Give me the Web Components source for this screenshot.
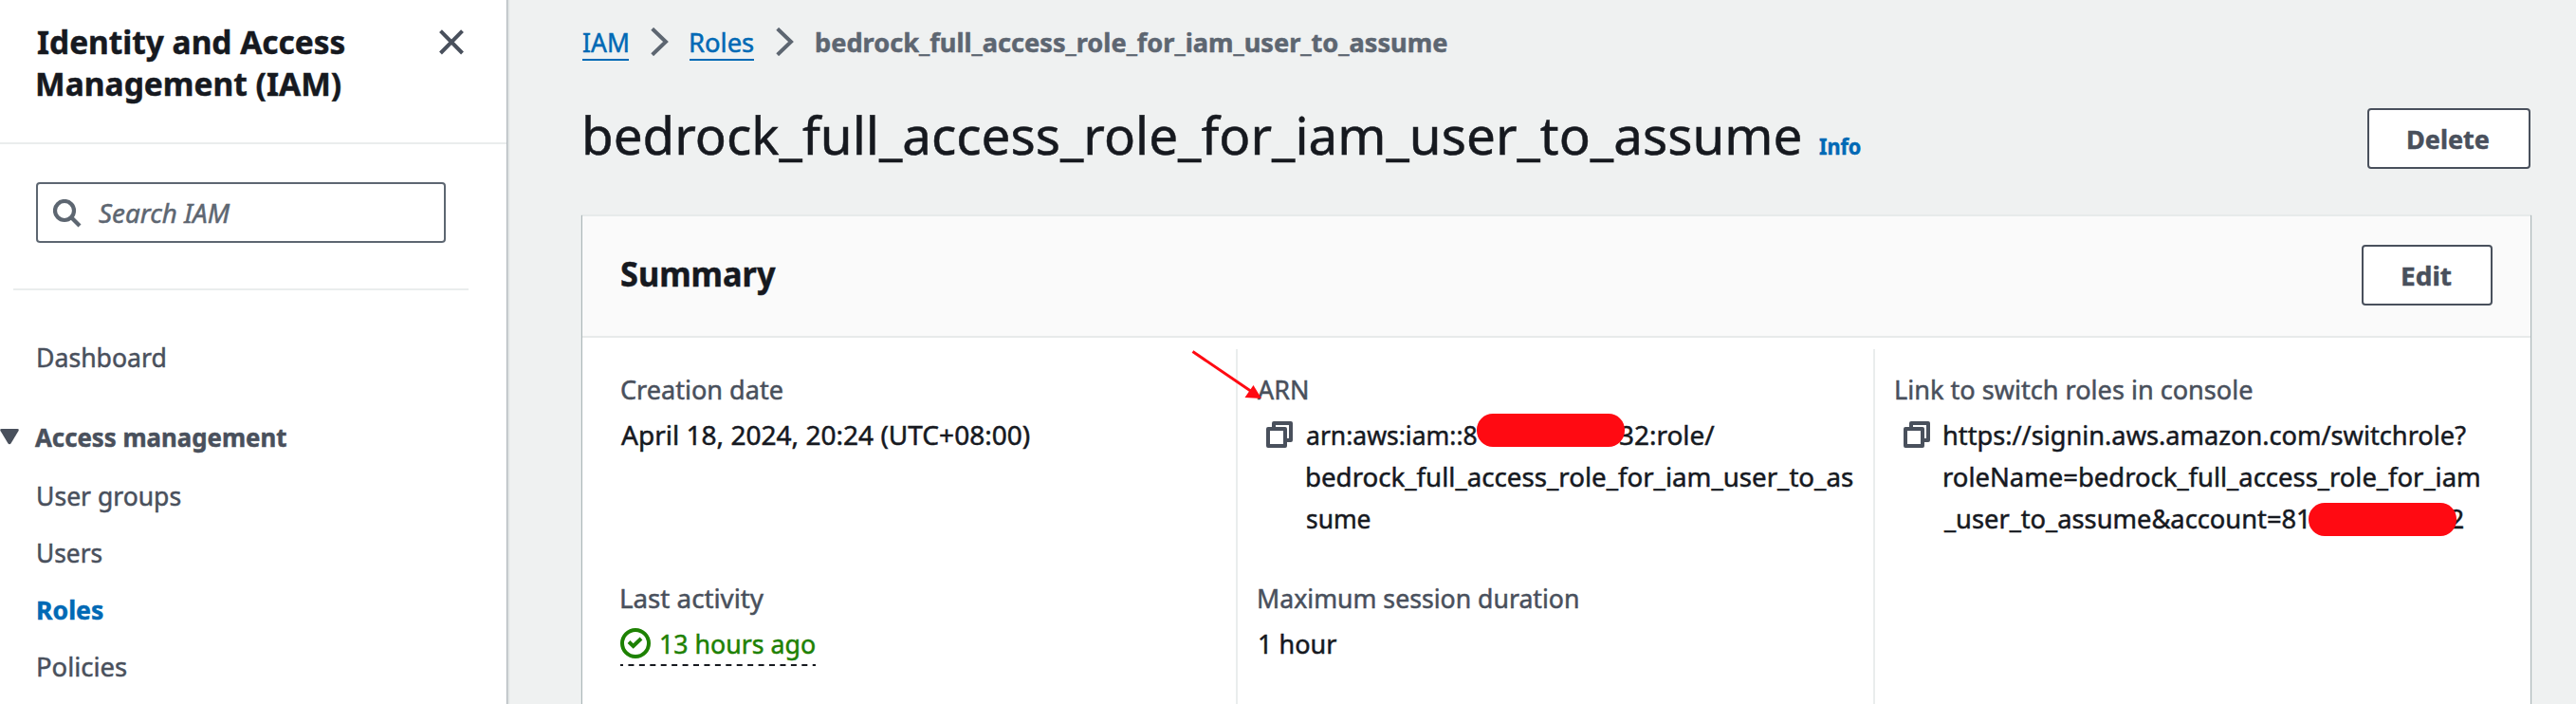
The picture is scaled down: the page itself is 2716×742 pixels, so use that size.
<!DOCTYPE html>
<html lang="en">
<head>
<meta charset="utf-8">
<title>IAM role</title>
<style>
html,body{margin:0;height:742px;overflow:hidden;background:#eff1f1}
body{font-family:"Noto Sans","Open Sans",sans-serif;font-size:27.5px;line-height:44px;color:#16191f}
</style>
</head>
<body>
<iam-app></iam-app>
<script>
const define=(name,html,after)=>customElements.define(name,class extends HTMLElement{
  connectedCallback(){
    if(this.shadowRoot)return;
    const t=document.createElement('template');
    t.innerHTML=typeof html==='function'?html(this):html;
    this.attachShadow({mode:'open'}).append(t.content.cloneNode(true));
    if(after)after(this);
  }
});

/* One line of text, scaled horizontally so that its glyphs span exactly "w" pixels. */
define('fit-text',`<style>:host{display:block;white-space:pre;flex:none}
span{display:inline-block;transform-origin:0 50%;-webkit-text-stroke:.5px currentColor}</style><span><slot></slot></span>`,el=>{
  const w=+el.getAttribute('w'),dx=+(el.getAttribute('dx')||0),s=el.shadowRoot.querySelector('span');
  const cs=getComputedStyle(el),c=document.createElement('canvas').getContext('2d');
  c.font=`${cs.fontStyle} ${cs.fontWeight} ${cs.fontSize} ${cs.fontFamily}`;
  const m=c.measureText(el.textContent),l=-m.actualBoundingBoxLeft,ink=m.actualBoundingBoxRight-l,k=w/ink;
  const dy=parseFloat(cs.fontSize)>30?0:1;
  el.style.width=w+'px';
  s.style.transform=`translate(${dx-l*k}px,${dy}px) scaleX(${k})`;
});

const icons={
  close:['26','26.5','0 0 26 26.5','<path d="M1.5 1.6 24.5 25M24.5 1.6 1.5 25" stroke="#49505c" stroke-width="4" fill="none"/>'],
  search:['30','30','0 0 30 30','<circle cx="12" cy="12" r="10" fill="none" stroke="#5d6671" stroke-width="4.2"/><path d="M19 19l9 9" stroke="#5d6671" stroke-width="4.2"/>'],
  caret:['20','17','0 0 20 17','<path d="M1.6 0H18.400Q20.600.3 19.400 2.300L11.600 15.200Q10 17.400 8.400 15.200L.6 2.300Q-.6.3 1.600 0Z" fill="#49505c"/>'],
  chevron:['19','30','0 0 19 30','<path d="M1.700 1.300 16 15 1.700 28.700" fill="none" stroke="#5d6671" stroke-width="4"/>'],
  copy:['28','28','0 0 28 28','<path d="M2 8h18v18H2zM8 8V2h18v18h-6" fill="none" stroke="#49505c" stroke-width="4" stroke-linejoin="round"/>'],
  check:['32','32','0 0 32 32','<circle cx="16" cy="16" r="14" fill="none" stroke="#1d8102" stroke-width="4"/><path d="M9 14.500l4.700 4.500 8.300-8" fill="none" stroke="#1d8102" stroke-width="4"/>']
};
define('ui-icon',el=>{const i=icons[el.getAttribute('name')];
  return `<style>:host{display:block;flex:none}svg{display:block}</style><svg width="${i[0]}" height="${i[1]}" viewBox="${i[2]}">${i[3]}</svg>`});

define('nav-item',`<style>:host{display:block;height:44px;margin:0 0 16px 39.500px;color:#49505c}
:host([active]){color:#0069b5;font-weight:700}</style><slot></slot>`);

define('nav-section',`<style>:host{display:flex;height:44px;color:#49505c;font-weight:700;margin:40px 0 18px}
ui-icon{margin:14px 16.500px 0 0}</style><ui-icon name="caret"></ui-icon><slot></slot>`);

define('search-box',`<style>:host{display:flex;box-sizing:border-box;margin:40px 0 0 38px;width:432px;height:64px;border:2px solid #5d6671;border-radius:4px;background:#fff;color:#5d6671;font-style:italic;padding:8px 0 0 16px}
ui-icon{margin:8px 18px 0 0}</style><ui-icon name="search"></ui-icon><slot></slot>`);

define('side-nav',`<style>:host{display:block;flex:none;width:534px;height:742px;background:#fff;box-shadow:1px 0 0 #b3b9be,2px 0 1px #d3d8d9,3px 0 1px #e3e6e6}
header{display:flex;justify-content:space-between;box-sizing:border-box;height:152px;border-bottom:2px solid #eaeded;padding:22px 45px 0 39.500px;font-weight:700;font-size:34.600px;color:#16191f}
header ui-icon{margin-top:9px}
hr{border:0;height:2px;width:480px;background:#eaeded;margin:48px 0 48px 14px}</style>
<header><div><fit-text w="323">Identity and Access</fit-text><fit-text w="319.500">Management (IAM)</fit-text></div><ui-icon name="close"></ui-icon></header>
<search-box><fit-text w="139">Search IAM</fit-text></search-box>
<hr>
<nav-item style="margin-bottom:0"><fit-text w="134">Dashboard</fit-text></nav-item>
<nav-section><fit-text w="265.500">Access management</fit-text></nav-section>
<nav-item><fit-text w="150">User groups</fit-text></nav-item>
<nav-item><fit-text w="67">Users</fit-text></nav-item>
<nav-item active><fit-text w="68.500">Roles</fit-text></nav-item>
<nav-item><fit-text w="93">Policies</fit-text></nav-item>`);

define('crumb-link',`<style>:host{display:block;box-sizing:border-box;height:42px;border-bottom:2px solid #0069b5;color:#0069b5;padding:0 1px}</style><slot></slot>`);

define('bread-crumb',`<style>:host{display:flex;height:44px;padding-top:22px}
ui-icon{margin:7px 22.500px 0}.now{margin-left:1.500px;color:#5d6671;font-weight:700}</style>
<crumb-link><fit-text w="47">IAM</fit-text></crumb-link><ui-icon name="chevron"></ui-icon>
<crumb-link><fit-text w="66">Roles</fit-text></crumb-link><ui-icon name="chevron"></ui-icon>
<fit-text class="now" w="665">bedrock_full_access_role_for_iam_user_to_assume</fit-text>`);

define('ui-button',`<style>:host{display:flex;justify-content:center;box-sizing:border-box;height:64px;border:2px solid #49505c;border-radius:4px;background:#fff;color:#49505c;font-weight:700;padding-top:8px}</style><slot></slot>`);

define('page-title',`<style>:host{display:flex;height:118px;padding-top:42px}
h1{margin:0;padding-left:3px;font-weight:400;font-size:54.800px;line-height:68px}
.info{font-size:24px;font-weight:700;color:#0069b5;margin:22.500px 0 0 19.500px}
ui-button{width:172px;margin:6px 0 0 auto}</style>
<h1><fit-text w="1281.500">bedrock_full_access_role_for_iam_user_to_assume</fit-text></h1>
<fit-text class="info" w="43.500">Info</fit-text>
<ui-button><fit-text w="85.500">Delete</fit-text></ui-button>`);

define('kv-item',`<style>:host{display:block;height:220px;position:relative}
.k{color:#49505c;margin-bottom:4px;height:44px}</style><div class="k"><slot name="label"></slot></div><slot></slot>`);

define('redaction-bar',`<style>:host{position:absolute;width:156px;height:35px;border-radius:17px;background:#ff0a12}</style>`);

define('copy-row',`<style>:host{display:flex;padding-left:8px}ui-icon{margin:8px 15.500px 0 0}</style><ui-icon name="copy"></ui-icon><div><slot></slot></div>`);

define('status-ok',`<style>:host{display:flex;box-sizing:border-box;width:206px;height:46px;color:#1d8102}
ui-icon{margin:6px 10.500px 0 -.5px}
svg{position:absolute;left:-.5px;top:92px}</style><ui-icon name="check"></ui-icon><slot></slot>
<svg width="206" height="2"><path d="M0 1H206" stroke="#16191f" stroke-width="2" stroke-dasharray="6 5.430" stroke-dashoffset="3"/></svg>`);

define('pointer-arrow',`<style>:host{position:absolute;left:-71px;top:-19px}svg{display:block}</style>
<svg width="76" height="54" viewBox="1256 369 76 54"><path d="M1257.500 370.500 1320 413" stroke="#ff0a12" stroke-width="3"/><path d="M1330 420 1312.500 419 1321.500 406Z" fill="#ff0a12"/></svg>`);

define('summary-card',`<style>:host{display:block;height:516px;background:#fff;box-shadow:0 1px 1px #b5babd,1px 1px 1px #aab7b8,-1px 1px 1px #aab7b8}
header{display:flex;justify-content:space-between;box-sizing:border-box;height:130px;border-top:2px solid #e7eaea;border-bottom:2px solid #e7eaea;background:#fafafa;padding:30px 40px 0 41px}
h2{margin:8.500px 0 0;font-size:35px;font-weight:700}
ui-button{width:138px}
.cols{display:grid;grid-template-columns:689px 672px 1fr;margin-top:12px;height:354px}
.cols>div{padding:20px 0 0 21.500px;border-left:2px solid #eaeded;box-sizing:border-box}
.cols>div:first-child{border:0;padding-left:40.500px}
.row{display:flex}</style>
<header><h2><fit-text w="162.500">Summary</fit-text></h2><ui-button><fit-text w="52">Edit</fit-text></ui-button></header>
<div class="cols">
<div>
<kv-item><fit-text slot="label" w="170.500">Creation date</fit-text><fit-text w="431">April 18, 2024, 20:24 (UTC+08:00)</fit-text></kv-item>
<kv-item><fit-text slot="label" w="151">Last activity</fit-text><status-ok><fit-text w="162.500">13 hours ago</fit-text></status-ok></kv-item>
</div>
<div>
<kv-item><fit-text slot="label" w="52.500" dx="-1">ARN</fit-text>
<copy-row><div class="row"><fit-text w="179">arn:aws:iam::8</fit-text><fit-text w="99.500" style="margin-left:150.500px">32:role/</fit-text></div>
<fit-text w="575">bedrock_full_access_role_for_iam_user_to_as</fit-text><fit-text w="67">sume</fit-text></copy-row>
<redaction-bar style="left:230.500px;top:48px"></redaction-bar><pointer-arrow></pointer-arrow></kv-item>
<kv-item><fit-text slot="label" w="336.500">Maximum session duration</fit-text><fit-text w="81" dx="1">1 hour</fit-text></kv-item>
</div>
<div>
<kv-item><fit-text slot="label" w="376">Link to switch roles in console</fit-text>
<copy-row><fit-text w="550">https://signin.aws.amazon.com/switchrole?</fit-text><fit-text w="564">roleName=bedrock_full_access_role_for_iam</fit-text>
<div class="row"><fit-text w="382" dx="-1">_user_to_assume&amp;account=81</fit-text><fit-text w="14" style="margin-left:151.500px">2</fit-text></div></copy-row>
<redaction-bar style="left:435.500px;top:142px"></redaction-bar></kv-item>
</div>
</div>`);

define('iam-app',`<style>:host{display:flex;height:742px;overflow:hidden;background:#eff1f1}
main{flex:1;min-width:0;padding:0 48px 0 80px}</style>
<side-nav></side-nav><main><bread-crumb></bread-crumb><page-title></page-title><summary-card></summary-card></main>`);
</script>
</body>
</html>
